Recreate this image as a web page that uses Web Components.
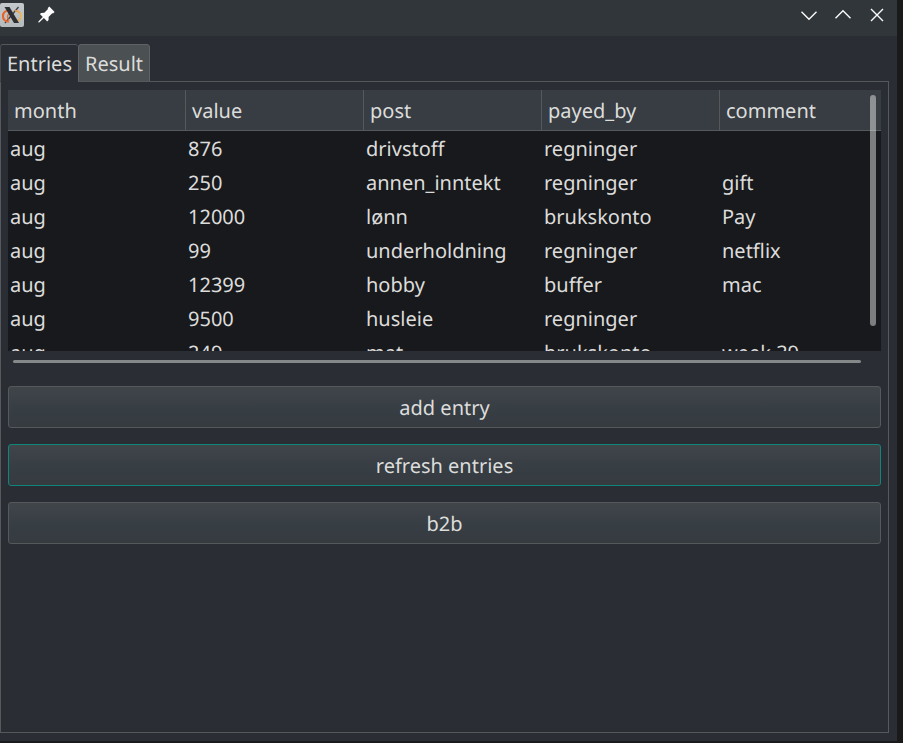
<!DOCTYPE html>
<html lang="en">
<head>
<meta charset="utf-8">
<title>Budget entries</title>
<style>
  html, body { height: 100%; }
  body {
    margin: 0;
    background: #1b1b1c;
    color: #dcdcdb;
    font: 20px/28px "Noto Sans", sans-serif;
    text-rendering: geometricPrecision;
    overflow: hidden;
  }
</style>
</head>
<body>
<budget-window></budget-window>

<script>
class BaseElement extends HTMLElement {
  render(html) {
    this.attachShadow({ mode: "open" });
    const template = document.createElement("template");
    template.innerHTML = html;
    this.shadowRoot.append(template.content.cloneNode(true));
  }
}

class TitleBar extends BaseElement {
  connectedCallback() {
    this.render(`
      <style>
        :host { display: flex; justify-content: space-between; height: 36px; background: #31363a; }
        .group { display: flex; align-items: center; height: 30px; }
        .left { gap: 10px; }
        .right { gap: 10px; padding-right: 8px; }
        button { all: unset; display: block; width: 24px; height: 24px; }
        svg { display: block; width: 24px; height: 24px; }
      </style>
      <div class="group left">
        <svg viewBox="0 0 24 24" aria-label="X11" role="img">
          <defs>
            <linearGradient id="plate" x1="0" y1="0" x2="0" y2="1"><stop offset="0" stop-color="#c4cacc"/><stop offset="1" stop-color="#b5babc"/></linearGradient>
            <linearGradient id="ring" gradientUnits="userSpaceOnUse" x1="2" x2="22" y1="0" y2="0"><stop offset="0" stop-color="#ee5a1c"/><stop offset=".45" stop-color="#e27b45"/><stop offset="1" stop-color="#e8bd68"/></linearGradient>
          </defs>
          <rect x="0" y="0" width="24" height="24" rx="2" fill="url(#plate)"/>
          <path d="M18.5 4L5 20" stroke="#3b3f41" stroke-width="1.3" fill="none"/>
          <path d="M9 7.3C1 8.5 1 18 9 18.7M15 7.5C23.4 9 23.2 17.6 14 18.7" stroke="url(#ring)" stroke-width="2" fill="none"/>
          <path d="M10.6 9.8C6.8 11 6.6 15.5 9.2 17.4" stroke="#ea6a33" stroke-width="1.3" fill="none"/>
          <path d="M4.5 4H9.5L19 20H14Z" fill="#2c3032"/>
        </svg>
        <button aria-label="Keep window on all desktops">
          <svg viewBox="0 0 24 24">
            <path d="M15.3 3.6L20.6 9L19 10.6L18.2 10.3L14.6 14L14.6 17L13.2 18.4L9.9 15.1L5.2 19.4L4.4 19.4L4.4 18.6L8.8 14L5.9 11.1L7.1 9.9L10.3 9.7L14 6L13.7 5.2Z" fill="#fcfcfc"/>
          </svg>
        </button>
      </div>
      <div class="group right">
        <button aria-label="Minimize"><svg viewBox="0 0 24 24"><path d="M4.5 8.7L12 16.2L19.5 8.7" fill="none" stroke="#fcfcfc" stroke-width="1.4"/></svg></button>
        <button aria-label="Maximize"><svg viewBox="0 0 24 24"><path d="M4.5 15.3L12 7.8L19.5 15.3" fill="none" stroke="#fcfcfc" stroke-width="1.4"/></svg></button>
        <button aria-label="Close"><svg viewBox="0 0 24 24"><path d="M6 6L18 18M18 6L6 18" fill="none" stroke="#fcfcfc" stroke-width="1.4"/></svg></button>
      </div>`);
  }
}

class TabPanel extends BaseElement {
  connectedCallback() {
    this.render(`
      <style>
        :host { display: flex; flex-direction: column; min-height: 0; }
        .tabs { display: flex; margin-bottom: -1px; }
        button { font: inherit; color: inherit; text-rendering: inherit; margin: 0; height: 38px; padding: 2px 6px 0;
                 border: 1px solid #5f6366; border-radius: 3px 3px 0 0; background: #4b5053; }
        button[aria-selected="true"] { background: #2a2e34; border-color: #55595c; border-left-color: #464a4e;
                                       border-right: 0; border-bottom-color: #2a2e34; z-index: 1; }
        .panel { flex: 1; border: 1px solid #55595c; padding: 8px 7px; display: flex; flex-direction: column; min-height: 0; }
      </style>
      <div class="tabs" role="tablist">
        <button role="tab" id="entries" aria-selected="true" aria-controls="panel">Entries</button>
        <button role="tab" aria-selected="false">Result</button>
      </div>
      <div class="panel" role="tabpanel" id="panel" aria-labelledby="entries"><slot></slot></div>`);
  }
}

class EntryTable extends BaseElement {
  connectedCallback() {
    const heads = ["month", "value", "post", "payed_by", "comment"];
    const rows = [
      ["aug", "876", "drivstoff", "regninger", ""],
      ["aug", "250", "annen_inntekt", "regninger", "gift"],
      ["aug", "12000", "lønn", "brukskonto", "Pay"],
      ["aug", "99", "underholdning", "regninger", "netflix"],
      ["aug", "12399", "hobby", "buffer", "mac"],
      ["aug", "9500", "husleie", "regninger", ""],
      ["aug", "249", "mat", "brukskonto", "week 39"]
    ];
    this.render(`
      <style>
        :host { display: block; }
        .frame { position: relative; height: 261px; overflow: hidden; background: #18191c; }
        table { border-collapse: separate; border-spacing: 0; table-layout: fixed; width: max(100%, 890px); }
        col { width: 178px; }
        th, td { text-align: left; font-weight: normal; box-sizing: border-box; white-space: nowrap; }
        th { height: 41px; padding: 2px 6px 0; background: #373d42; border-right: 1px solid #55595c; border-bottom: 1px solid #55595c; }
        th:last-child { border-right: 0; }
        td { height: 34px; padding: 2px 2px 0; }
        .bar { border-radius: 3px; }
        .vertical { position: absolute; top: 5px; right: 5px; width: 6px; height: 231px; background: rgb(255 255 255 / .44); }
        .horizontal { height: 3px; margin: 9px 20px 8px 5px; background: #858889; }
      </style>
      <div class="frame">
        <table>
          <colgroup>${heads.map(() => "<col>").join("")}</colgroup>
          <thead><tr>${heads.map(h => `<th scope="col">${h}</th>`).join("")}</tr></thead>
          <tbody>${rows.map(r => `<tr>${r.map(c => `<td>${c}</td>`).join("")}</tr>`).join("")}</tbody>
        </table>
        <div class="bar vertical"></div>
      </div>
      <div class="bar horizontal"></div>`);
  }
}

class PushButton extends BaseElement {
  connectedCallback() {
    this.render(`
      <style>
        :host { display: block; }
        button { display: block; width: 100%; height: 42px; margin: 0; padding: 2px 0 0; font: inherit; color: inherit; text-rendering: inherit;
                 border: 1px solid #55595c; border-radius: 3px; background: linear-gradient(#40454a, #363d43 60%, #363b40); }
        :host([active]) button { border-color: #10857a; }
      </style>
      <button type="button"><slot></slot></button>`);
  }
}

class BudgetWindow extends BaseElement {
  connectedCallback() {
    this.render(`
      <style>
        :host { display: flex; flex-direction: column; box-sizing: border-box; height: 100vh;
                border: solid #1a1a1b; border-width: 0 6px 2px 0; background: #2a2e34; }
        tab-panel { flex: 1; margin: 8px 8px 8px 0; }
        .actions { display: flex; flex-direction: column; gap: 16px; padding-top: 15px; }
      </style>
      <title-bar></title-bar>
      <tab-panel>
        <entry-table></entry-table>
        <div class="actions">
          <push-button>add entry</push-button>
          <push-button active>refresh entries</push-button>
          <push-button>b2b</push-button>
        </div>
      </tab-panel>`);
  }
}

customElements.define("title-bar", TitleBar);
customElements.define("tab-panel", TabPanel);
customElements.define("entry-table", EntryTable);
customElements.define("push-button", PushButton);
customElements.define("budget-window", BudgetWindow);
</script>
</body>
</html>
